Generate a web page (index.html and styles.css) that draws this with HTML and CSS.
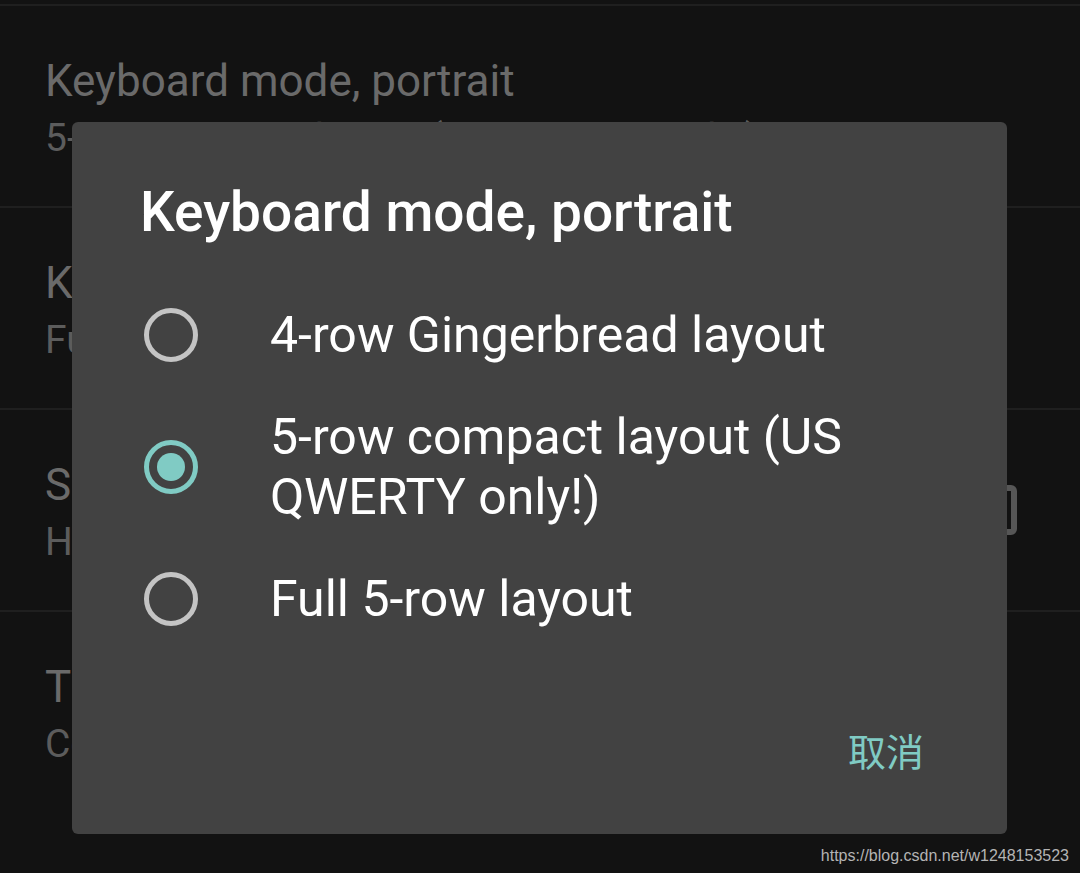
FILE: index.html
```html
<!DOCTYPE html>
<html>
<head>
<meta charset="utf-8">
<link rel="stylesheet" href="styles.css">
</head>
<body>
<div class="list">
  <div class="row">
    <div class="row-text">
      <div class="row-title">Keyboard mode, portrait</div>
      <div class="row-sub">5-row compact layout (US QWERTY only!)</div>
    </div>
  </div>
  <div class="row">
    <div class="row-text">
      <div class="row-title">Keyboard mode, landscape</div>
      <div class="row-sub">Full 5-row layout</div>
    </div>
  </div>
  <div class="row">
    <div class="row-text">
      <div class="row-title">Suggestions in landscape</div>
      <div class="row-sub">Hide suggestions in landscape</div>
    </div>
    <div class="checkbox"></div>
  </div>
  <div class="row">
    <div class="row-text">
      <div class="row-title">Theme</div>
      <div class="row-sub">Color scheme</div>
    </div>
  </div>
</div>

<div class="dialog">
  <div class="dialog-title">Keyboard mode, portrait</div>
  <div class="options">
    <div class="option">
      <span class="radio"></span>
      <span class="option-text">4-row Gingerbread layout</span>
    </div>
    <div class="option">
      <span class="radio checked"></span>
      <span class="option-text">5-row compact layout (US QWERTY only!)</span>
    </div>
    <div class="option">
      <span class="radio"></span>
      <span class="option-text">Full 5-row layout</span>
    </div>
  </div>
  <div class="actions">
    <span class="btn">取消</span>
  </div>
</div>

<div class="watermark">https://blog.csdn.net/w1248153523</div>
</body>
</html>
```

FILE: styles.css
```css
html, body {
  margin: 0;
  padding: 0;
}
body {
  width: 1080px;
  height: 873px;
  background: #121212;
  overflow: hidden;
  font-family: Roboto, "Noto Sans", sans-serif;
  position: relative;
}
.list {
  padding-top: 4px;
}
.row {
  box-sizing: border-box;
  height: 202px;
  border-top: 2px solid #1f1f1f;
  display: flex;
  align-items: center;
  padding-left: 45px;
  padding-right: 63px;
}
.row-text {
  flex: 1;
  min-width: 0;
  margin-top: 8px;
  white-space: nowrap;
  overflow: hidden;
}
.row-title {
  font-size: 44px;
  line-height: 56px;
  color: #6a6a6a;
}
.row-sub {
  font-size: 39px;
  line-height: 58px;
  color: #5c5c5c;
}
.checkbox {
  width: 38px;
  height: 38px;
  border: 6px solid #565656;
  border-radius: 6px;
  flex: none;
}
.dialog {
  position: absolute;
  left: 72px;
  top: 122px;
  width: 935px;
  height: 712px;
  background: #424242;
  border-radius: 6px;
  display: flex;
  flex-direction: column;
  box-sizing: border-box;
  padding-top: 58px;
}
.dialog-title {
  font-size: 55px;
  line-height: 64px;
  font-weight: 500;
  color: #ffffff;
  padding-left: 68px;
  margin-bottom: 40px;
}
.options {
  display: flex;
  flex-direction: column;
}
.option {
  display: flex;
  align-items: center;
  padding: 21px 60px 21px 72px;
}
.radio {
  flex: none;
  width: 44px;
  height: 44px;
  border: 5px solid #c4c4c4;
  border-radius: 50%;
  display: flex;
  align-items: center;
  justify-content: center;
  margin-right: 72px;
}
.radio.checked {
  border-color: #80cbc4;
}
.radio.checked::after {
  content: "";
  width: 28px;
  height: 28px;
  border-radius: 50%;
  background: #80cbc4;
}
.option-text {
  font-size: 50px;
  line-height: 60px;
  color: #ffffff;
}
.actions {
  margin-top: auto;
  display: flex;
  justify-content: flex-end;
  padding: 0 83px 59px 0;
}
.btn {
  font-family: "Noto Sans CJK SC", sans-serif;
  font-size: 38px;
  line-height: 50px;
  color: #80cbc4;
}
.watermark {
  position: absolute;
  right: 11px;
  bottom: 8px;
  font-family: "Liberation Sans", Arial, sans-serif;
  font-size: 16px;
  color: #b4b4b4;
}
```
